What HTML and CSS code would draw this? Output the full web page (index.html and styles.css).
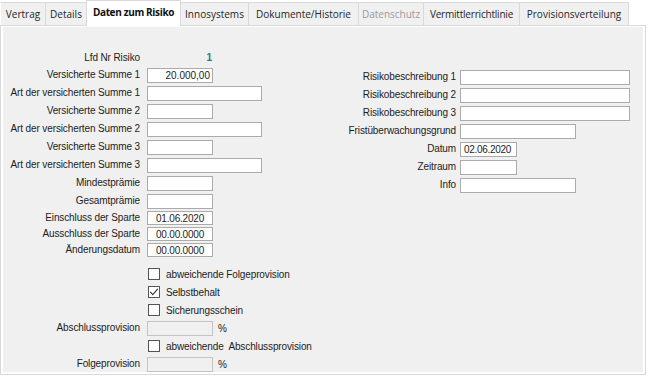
FILE: index.html
```html
<!DOCTYPE html>
<html lang="de">
<head>
<meta charset="utf-8">
<title>Daten zum Risiko</title>
<link rel="stylesheet" href="styles.css">
</head>
<body>
<div class="tabs">
  <div class="tab t-vertrag">Vertrag</div>
  <div class="tab t-details">Details</div>
  <div class="tab active t-risiko">Daten zum Risiko</div>
  <div class="tab t-inno">Innosystems</div>
  <div class="tab t-doku">Dokumente/Historie</div>
  <div class="tab disabled t-daten">Datenschutz</div>
  <div class="tab t-verm">Vermittlerrichtlinie</div>
  <div class="tab t-prov">Provisionsverteilung</div>
</div>
<div class="page">
  <div class="panel">
    <div class="col-left">
      <div class="grid left-grid">
        <div class="lbl r-first">Lfd Nr Risiko</div>
        <div class="val r-first"><span class="lfd">1</span></div>

        <div class="lbl">Versicherte Summe 1</div>
        <div class="val"><input class="inp w-s num" type="text" value="20.000,00"></div>

        <div class="lbl">Art der versicherten Summe 1</div>
        <div class="val"><input class="inp w-m" type="text" value=""></div>

        <div class="lbl">Versicherte Summe 2</div>
        <div class="val"><input class="inp w-s" type="text" value=""></div>

        <div class="lbl">Art der versicherten Summe 2</div>
        <div class="val"><input class="inp w-m" type="text" value=""></div>

        <div class="lbl">Versicherte Summe 3</div>
        <div class="val"><input class="inp w-s" type="text" value=""></div>

        <div class="lbl">Art der versicherten Summe 3</div>
        <div class="val"><input class="inp w-m" type="text" value=""></div>

        <div class="lbl">Mindestprämie</div>
        <div class="val"><input class="inp w-s" type="text" value=""></div>

        <div class="lbl">Gesamtprämie</div>
        <div class="val"><input class="inp w-s" type="text" value=""></div>

        <div class="lbl r-date">Einschluss der Sparte</div>
        <div class="val r-date"><input class="inp w-s date" type="text" value="01.06.2020"></div>

        <div class="lbl r-date">Ausschluss der Sparte</div>
        <div class="val r-date"><input class="inp w-s date" type="text" value="00.00.0000"></div>

        <div class="lbl r-date">Änderungsdatum</div>
        <div class="val r-date"><input class="inp w-s date" type="text" value="00.00.0000"></div>
      </div>

      <div class="grid left-grid checks">
        <div class="lbl"></div>
        <div class="val"><span class="cb"></span><span class="cb-text">abweichende Folgeprovision</span></div>

        <div class="lbl"></div>
        <div class="val"><span class="cb"><svg width="12" height="12" viewBox="0 0 12 12"><path d="M2.2 5.8 L4.8 8.6 L9.8 2.8" fill="none" stroke="#333" stroke-width="1.1"/></svg></span><span class="cb-text">Selbstbehalt</span></div>

        <div class="lbl"></div>
        <div class="val"><span class="cb"></span><span class="cb-text">Sicherungsschein</span></div>

        <div class="lbl">Abschlussprovision</div>
        <div class="val"><input class="inp w-s off" type="text" value="" disabled><span class="pct">%</span></div>

        <div class="lbl"></div>
        <div class="val"><span class="cb"></span><span class="cb-text">abweichende&nbsp; Abschlussprovision</span></div>

        <div class="lbl">Folgeprovision</div>
        <div class="val"><input class="inp w-s off" type="text" value="" disabled><span class="pct">%</span></div>
      </div>
    </div>

    <div class="col-right">
      <div class="grid right-grid">
        <div class="lbl">Risikobeschreibung 1</div>
        <div class="val"><input class="inp w-l" type="text" value=""></div>

        <div class="lbl">Risikobeschreibung 2</div>
        <div class="val"><input class="inp w-l" type="text" value=""></div>

        <div class="lbl">Risikobeschreibung 3</div>
        <div class="val"><input class="inp w-l" type="text" value=""></div>

        <div class="lbl">Fristüberwachungsgrund</div>
        <div class="val"><input class="inp w-m2" type="text" value=""></div>

        <div class="lbl">Datum</div>
        <div class="val"><input class="inp w-xs dt" type="text" value="02.06.2020"></div>

        <div class="lbl">Zeitraum</div>
        <div class="val"><input class="inp w-xs" type="text" value=""></div>

        <div class="lbl">Info</div>
        <div class="val"><input class="inp w-m2" type="text" value=""></div>
      </div>
    </div>
  </div>
</div>
</body>
</html>
```

FILE: styles.css
```css
* { box-sizing: border-box; }

html, body {
  margin: 0;
  padding: 0;
  background: #ffffff;
  width: 648px;
  height: 377px;
  overflow: hidden;
}

body {
  font-family: "Liberation Sans", Arial, sans-serif;
  font-size: 10px;
  color: #1c1c1c;
}

/* ---------- tabs ---------- */
.tabs {
  display: flex;
  align-items: flex-end;
  height: 25px;
  position: relative;
  z-index: 2;
}

.tab {
  flex: none;
  height: 23px;
  background: #f0f0f0;
  border: 1px solid #d9d9d9;
  border-bottom: none;
  border-right: none;
  font-family: "Open Sans", "Noto Sans", sans-serif;
  font-size: 10px;
  color: #262626;
  display: flex;
  align-items: center;
  justify-content: center;
  padding-bottom: 1px;
  white-space: nowrap;
}

.tab.t-prov { border-right: 1px solid #d9d9d9; }

.tab.active {
  height: 26px;
  margin-bottom: -1px;
  background: #ffffff;
  border-right: 1px solid #d9d9d9;
  font-weight: 700;
  letter-spacing: -0.35px;
  color: #111;
  padding-bottom: 4px;
}

.tab.active + .tab { border-left: none; }

.tab.disabled { color: #9a9a9a; }

.t-vertrag { width: 45px; border-left-color: #ffffff; }
.t-details { width: 41px; }
.t-risiko  { width: 95px; }
.t-inno    { width: 67px; }
.t-doku    { width: 110px; }
.t-daten   { width: 65px; }
.t-verm    { width: 96px; letter-spacing: -0.2px; }
.t-prov    { width: 110px; }

/* ---------- page ---------- */
.page {
  width: 646px;
  height: 350px;
  border: 1px solid #d9d9d9;
  background: #ffffff;
  padding: 1px 2px 2px 2px;
}

.panel {
  height: 345px;
  background: #f0f0f0;
  display: flex;
  overflow: hidden;
}

.col-left {
  width: 332px;
  flex: none;
  padding-top: 22px;
}

.col-right {
  flex: 1;
  padding-top: 41px;
}

.grid {
  display: grid;
  align-items: center;
}

.left-grid {
  grid-template-columns: 137px 1fr;
  column-gap: 7px;
  grid-auto-rows: auto;
}

.checks {
  margin-top: 7px;
}

.right-grid {
  grid-template-columns: 121px 1fr;
  column-gap: 4px;
  grid-auto-rows: 18px;
}

.lbl {
  text-align: right;
  white-space: nowrap;
  letter-spacing: -0.12px;
  line-height: 12px;
  display: flex;
  align-items: center;
  justify-content: flex-end;
  height: 18px;
}

.val {
  display: flex;
  align-items: center;
  height: 18px;
}

.left-grid > .r-first { height: 17px; }
.left-grid > .r-date { height: 16px; }

.lfd {
  display: block;
  width: 66px;
  text-align: right;
  padding-right: 1px;
  color: #237f80;
  font-weight: 700;
  font-size: 10px;
}

/* ---------- inputs ---------- */
.inp {
  display: block;
  height: 15px;
  margin: 0;
  padding: 0 3px;
  border: 1px solid #ababab;
  border-radius: 0;
  background: #ffffff;
  font-family: "Liberation Sans", Arial, sans-serif;
  font-size: 10px;
  color: #1c1c1c;
  outline: none;
  line-height: 13px;
}

.inp.num { text-align: right; padding-right: 2px; }
.inp.date { height: 14px; text-align: center; padding: 0; letter-spacing: -0.2px; }
.inp.dt { padding: 0 1px 0 3px; letter-spacing: -0.3px; }
.inp.off { background: #f0f0f0; border-color: #c4c4c4; }

.w-xs { width: 57px; }
.w-s  { width: 66px; }
.w-m  { width: 115px; }
.w-m2 { width: 116px; }
.w-l  { width: 170px; }

.pct {
  margin-left: 5px;
  letter-spacing: 0;
}

/* ---------- checkboxes ---------- */
.cb {
  flex: none;
  width: 12px;
  height: 12px;
  margin-left: 1px;
  border: 1px solid #555555;
  background: #ffffff;
  position: relative;
}

.cb svg {
  position: absolute;
  left: -1px;
  top: -1px;
}

.cb-text {
  margin-left: 6px;
  white-space: nowrap;
  letter-spacing: -0.12px;
}
```
